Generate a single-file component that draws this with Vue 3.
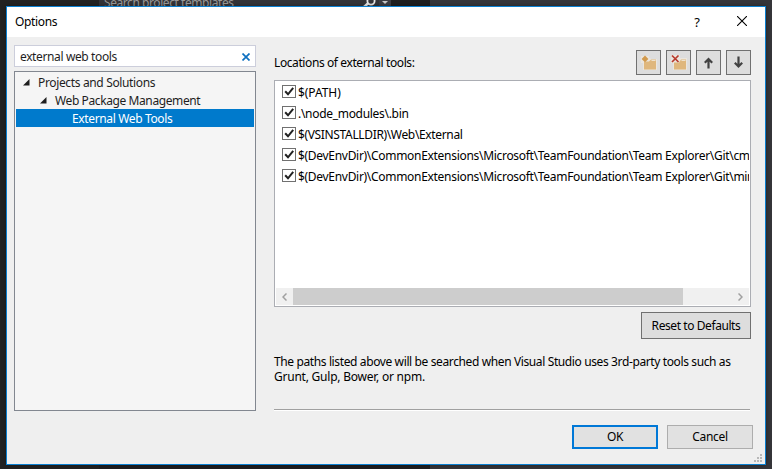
<script setup>
import { ref } from 'vue'

const query = ref('external web tools')
const tree = [
  { label: 'Projects and Solutions', cls: 'lvl0' },
  { label: 'Web Package Management', cls: 'lvl1' },
  { label: 'External Web Tools', cls: 'lvl2 selected' },
]
const paths = [
  { text: '$(PATH)', cls: 'p0' },
  { text: '.\\node_modules\\.bin', cls: 'p1' },
  { text: '$(VSINSTALLDIR)\\Web\\External', cls: 'p2' },
  { text: '$(DevEnvDir)\\CommonExtensions\\Microsoft\\TeamFoundation\\Team Explorer\\Git\\cmd', cls: 'p3' },
  { text: '$(DevEnvDir)\\CommonExtensions\\Microsoft\\TeamFoundation\\Team Explorer\\Git\\mingw32\\bin', cls: 'p3' },
]
</script>

<template>
  <div class="desktop">
    <div class="backdrop">
      <div class="bg-left"></div>
      <div class="bg-search">
        <span>Search project templates</span>
        <svg class="mag" width="32" height="7" viewBox="0 0 32 7">
          <circle cx="12" cy="1" r="3.6" fill="none" stroke="#e8e8e8" stroke-width="1.8" />
          <path d="M9.5 3L5 7" stroke="#e8e8e8" stroke-width="2.4" />
          <rect x="20" width="12" height="7" fill="#3c3c42" />
          <path d="M23 1h6l-3 3z" fill="#c8c8c8" />
        </svg>
      </div>
      <div class="bg-gap"></div>
      <div class="bg-right"></div>
    </div>

    <div class="dialog">
      <header class="titlebar">
        <span class="title">Options</span>
        <span class="help">?</span>
        <svg class="close" width="10" height="10" viewBox="0 0 10 10"><path d="M0 0L10 10M10 0L0 10" stroke="#000" stroke-width="1.1" /></svg>
      </header>

      <div class="body">
        <aside class="side">
          <div class="search">
            <span class="query">{{ query }}</span>
            <svg width="8" height="8" viewBox="0 0 8 8"><path d="M.5 .5L7.5 7.5M7.5 .5L.5 7.5" stroke="#0e70c0" stroke-width="1.7" /></svg>
          </div>
          <div class="tree">
            <div v-for="n in tree" :key="n.label" class="node" :class="n.cls">
              <svg class="arrow" width="7" height="7" viewBox="0 0 7 7"><path d="M6.5 0V6.5H0z" fill="#1e1e1e" /></svg>
              <span class="node-label">{{ n.label }}</span>
            </div>
          </div>
        </aside>

        <main class="content">
          <div class="toolbar">
            <span class="caption">Locations of external tools:</span>
            <div class="tools">
              <button class="tool">
                <svg width="23" height="23" viewBox="0 0 23 23">
                  <path d="M5 8h2v-1h6l1 1h6v11H6v-7H4V5h8v3z" fill="#ebe6de" />
                  <path d="M7 10.500h5l2-2h5V18.500H7z" fill="#dfb77d" />
                  <path d="M14.500 9.500h4" stroke="#efe2cd" />
                  <path d="M8 4.500L11.400 7.900L8 11.300L4.600 7.900z" fill="#d19a4e" />
                </svg>
              </button>
              <button class="tool">
                <svg width="23" height="23" viewBox="0 0 23 23">
                  <path d="M4 4h9v3h7v12H6v-7H4z" fill="#ebe6de" />
                  <path d="M7 11.500h5l2-3h5V18.500H7z" fill="#dfb77d" />
                  <path d="M14.500 9.500h4" stroke="#efe2cd" />
                  <path d="M5 4.500L11.500 11M11.500 4.500L5 11" stroke="#b83a2d" stroke-width="1.700" />
                </svg>
              </button>
              <button class="tool">
                <svg width="23" height="23" viewBox="0 0 23 23"><path d="M11.500 17.500V7.500M7.800 11.700L11.500 8L15.200 11.700" fill="none" stroke="#424242" stroke-width="2.200" /></svg>
              </button>
              <button class="tool">
                <svg width="23" height="23" viewBox="0 0 23 23"><path d="M11.500 5.500V15.500M7.800 11.800L11.500 15.500L15.200 11.800" fill="none" stroke="#424242" stroke-width="2.200" /></svg>
              </button>
            </div>
          </div>

          <div class="list">
            <div class="items">
              <div v-for="p in paths" :key="p.text" class="item">
                <svg class="check" width="14" height="13" viewBox="0 0 14 13">
                  <rect x=".5" y=".5" width="13" height="12" fill="#fff" stroke="#707070" />
                  <path d="M3.200 6.300L6 9.300L11.200 2.800" fill="none" stroke="#212121" stroke-width="2" />
                </svg>
                <span class="path" :class="p.cls">{{ p.text }}</span>
              </div>
            </div>
            <div class="scrollbar">
              <div class="sb-btn"><svg width="5" height="8" viewBox="0 0 5 8"><path d="M4.500 .5L1 4L4.500 7.500" fill="none" stroke="#a0a0a0" stroke-width="1.500" /></svg></div>
              <div class="thumb"></div>
              <div class="track"></div>
              <div class="sb-btn"><svg width="5" height="8" viewBox="0 0 5 8"><path d="M.5 .5L4 4L.5 7.500" fill="none" stroke="#a0a0a0" stroke-width="1.500" /></svg></div>
            </div>
          </div>

          <button class="reset"><span>Reset to Defaults</span></button>
          <p class="hint"><span class="hint-first">The paths listed above will be searched when Visual Studio uses 3rd-party tools such as</span><span class="hint-second">Grunt, Gulp, Bower, or npm.</span></p>
          <div class="rule"></div>
        </main>
      </div>

      <footer class="footer">
        <button class="btn ok">OK</button>
        <button class="btn cancel"><span>Cancel</span></button>
      </footer>
      <svg class="grip" width="8" height="8" viewBox="0 0 8 8" fill="#b8b8b8"><path d="M6 0h2v2H6zM3 3h2v2H3zM6 3h2v2H6zM0 6h2v2H0zM3 6h2v2H3zM6 6h2v2H6z" /></svg>
    </div>
  </div>
</template>

<style>
body { background: #222; overflow: hidden; }
</style>

<style scoped>
.desktop {
  position: relative; box-sizing: border-box; width: 772px; height: 469px; padding: 6px; overflow: hidden;
  font-family: "Noto Sans", "Open Sans", sans-serif; font-size: 12px; line-height: 16px; color: #000; white-space: pre;
}
.desktop * { box-sizing: border-box; }
.backdrop { position: absolute; inset: 0; display: flex; }
.bg-left { width: 99px; background: #222; }
.bg-search { display: flex; justify-content: space-between; width: 292px; background: linear-gradient(#333337 0 50%, #1e1e20 50%); color: #999; }
.bg-search span { margin: -5px 0 0 5px; letter-spacing: -0.43px; }
.bg-gap { width: 39px; background: #1f1f20; }
.bg-right { flex: 1; background: #353539; }
button { font: inherit; color: inherit; padding: 0; margin: 0; border-radius: 0; display: flex; align-items: center; justify-content: center; }
.dialog { position: relative; width: 760px; height: 459px; border: 1px solid #0a7fd0; background: #efefef; display: flex; flex-direction: column; box-shadow: 0 0 4px rgba(0, 0, 0, .35); }
.titlebar { height: 30px; background: #fff; display: flex; align-items: center; padding: 0 18px 2px 8px; }
.title { flex: 1; padding-top: 2px; letter-spacing: -0.35px; }
.help { padding-top: 1px; font-size: 13px; margin-right: 37px; }
.body { display: flex; height: 382px; padding: 8px 14px 0 7px; gap: 18px; }
.side { width: 242px; display: flex; flex-direction: column; gap: 4px; }
.search { height: 22px; background: #fff; border: 1px solid #cccedb; display: flex; align-items: center; justify-content: space-between; padding: 1px 5px 0; color: #1e1e1e; }
.query { padding-top: 1px; letter-spacing: -0.38px; }
.tree { height: 340px; background: #f5f5f5; border: 1px solid #828790; padding: 1px; color: #1e1e1e; }
.node { height: 18px; display: flex; align-items: center; }
.node-label { padding-top: 1px; }
.arrow { margin-right: 8px; flex: none; }
.lvl0 { padding-left: 7px; letter-spacing: -0.35px; }
.lvl1 { padding-left: 24px; letter-spacing: -0.4px; }
.lvl2 { padding-left: 56px; letter-spacing: -0.36px; }
.selected { background: #007acc; color: #fff; }
.selected .arrow { display: none; }
.content { width: 477px; display: flex; flex-direction: column; }
.toolbar { height: 35px; padding-top: 5px; display: flex; justify-content: space-between; }
.caption { margin-top: 5px; letter-spacing: -0.4px; }
.tools { display: flex; gap: 5px; }
.tool { width: 25px; height: 25px; border: 1px solid #707070; background: #ddd; }
.list { height: 227px; background: #fff; border: 1px solid #abadb3; padding: 1px; display: flex; flex-direction: column; justify-content: space-between; }
.items { padding: 3px 0 0 6px; overflow: hidden; }
.item { height: 21px; display: flex; align-items: flex-start; gap: 2px; }
.check { flex: none; }
.path { letter-spacing: -0.3px; }
.p0 { letter-spacing: -0.05px; }
.p2 { letter-spacing: -0.35px; }
.scrollbar { height: 17px; display: flex; background: #f0f0f0; }
.sb-btn { width: 17px; display: flex; align-items: center; justify-content: center; }
.thumb { width: 390px; background: #cdcdcd; }
.track { flex: 1; }
.reset { align-self: flex-end; width: 110px; height: 27px; margin-top: 5px; border: 1px solid #707070; background: #ddd; letter-spacing: -0.42px; }
.hint { margin: 15px 0 0; line-height: 15px; }
.hint span { display: block; }
.hint-first { letter-spacing: -0.38px; }
.hint-second { letter-spacing: -0.23px; }
.rule { margin-top: 25px; width: 476px; height: 2px; background: #a0a0a0; border-bottom: 1px solid #fff; }
.footer { display: flex; justify-content: flex-end; gap: 9px; padding: 6px 12px 0 0; }
.btn { width: 86px; height: 24px; background: #e1e1e1; border: 1px solid #adadad; letter-spacing: -0.3px; }
.ok { border: 2px solid #0078d7; }
.grip { position: absolute; right: 3px; bottom: 2px; }
</style>
